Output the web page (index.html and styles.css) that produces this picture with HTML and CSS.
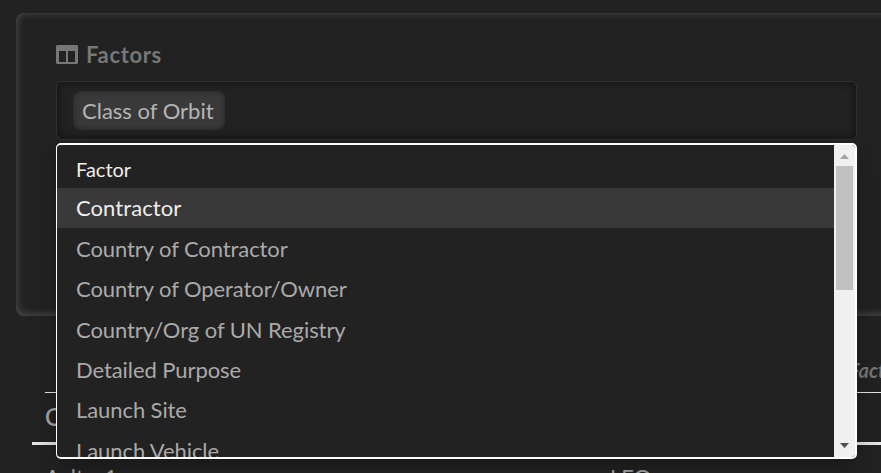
FILE: index.html
```html
<!DOCTYPE html>
<html lang="en">
<head>
<meta charset="utf-8">
<title>Factors</title>
<link rel="stylesheet" href="styles.css">
</head>
<body>
<section class="panel">
  <h2 class="panel-title">
    <svg class="icon" viewBox="0 0 22 19" aria-hidden="true"><path fill="currentColor" fill-rule="evenodd" d="M1 0H21L22 1V18L21 19H1L0 18V1ZM3 6V17H10V6ZM12 6V17H19V6Z"/></svg>
    <span>Factors</span>
  </h2>
  <div class="select">
    <span class="tag">Class of Orbit</span>
    <div class="dropdown">
      <div class="options">
        <div class="group">Factor</div>
        <div class="option active">Contractor</div>
        <div class="option">Country of Contractor</div>
        <div class="option">Country of Operator/Owner</div>
        <div class="option">Country/Org of UN Registry</div>
        <div class="option">Detailed Purpose</div>
        <div class="option">Launch Site</div>
        <div class="option">Launch Vehicle</div>
      </div>
      <div class="scrollbar">
        <svg class="arrow" viewBox="0 0 9 5"><path fill="#a3a3a3" d="M0 5L4.5 0L9 5Z"/></svg>
        <div class="thumb"></div>
        <svg class="arrow down" viewBox="0 0 9 5"><path fill="#505050" d="M0 0H9L4.5 5Z"/></svg>
      </div>
    </div>
  </div>
</section>
<section class="table">
  <div class="span-head">Factor</div>
  <div class="head">C</div>
  <div class="row"><span>Aalto-1</span><span>LEO</span></div>
</section>
</body>
</html>
```
FILE: styles.css
```css
* { box-sizing: border-box; }
html { overflow: hidden; }
body {
  margin: 0;
  height: 473px;
  padding: 13px 0 0 16px;
  overflow: hidden;
  background: #222;
  color: #aaa;
  font: 22px/30px Lato, sans-serif;
}
.panel {
  width: 900px;
  height: 303px;
  padding: 27px 0 0 40px;
  border-radius: 8px;
  box-shadow: inset 0 -1px 9px #555;
}
.panel-title {
  display: flex;
  align-items: center;
  gap: 8px;
  height: 30px;
  margin: 0 0 11px;
  color: #777;
  font-size: 22px;
  font-weight: 700;
  letter-spacing: .65px;
}
.icon { width: 22px; height: 19px; margin-top: -1px; }
.select {
  position: relative;
  width: 801px;
  height: 59px;
  padding: 9px 16px;
  border: 1px solid #303030;
  border-radius: 6px;
  box-shadow: inset 0 0 9px #111;
}
.tag {
  display: block;
  width: 152px;
  height: 39px;
  padding-left: 9px;
  border-radius: 8px;
  background: #393939;
  box-shadow: inset 0 0 5px #222;
  color: #b5b5b5;
  line-height: 40px;
  white-space: nowrap;
}
.dropdown {
  position: absolute;
  z-index: 2;
  top: 61px;
  left: -1px;
  display: flex;
  width: 801px;
  height: 316px;
  overflow: hidden;
  border: solid #fff;
  border-width: 2px 2px 2px 1px;
  border-radius: 5px;
  background: #222;
  box-shadow: 0 9px 26px rgba(0, 0, 0, .3);
}
.options { flex: 1; overflow: hidden; }
.group {
  height: 43px;
  padding: 9px 0 0 19px;
  color: #eee;
  font-size: 20px;
}
.option {
  height: 40.35px;
  padding-left: 19px;
  line-height: 40px;
  letter-spacing: -.08px;
}
.active {
  height: 40px;
  margin-bottom: .85px;
  background: #393939;
  color: #eee;
  letter-spacing: .08px;
}
.scrollbar {
  display: flex;
  flex-direction: column;
  width: 21px;
  padding: 9px 2px 9px;
  background: #f0f0f0;
}
.arrow { width: 9px; height: 5px; margin-left: 4px; }
.thumb { height: 124px; margin: 7px 0 auto; background: #c1c1c1; }
.table { width: 869px; margin-left: 16px; }
.span-head {
  height: 77px;
  margin-left: 13px;
  padding: 39px 0 0 804px;
  border-bottom: 1px solid #e6e8e8;
  color: #777;
  font-size: 20px;
  font-style: italic;
  font-weight: 700;
}
.head {
  height: 52px;
  padding: 9px 0 0 13px;
  border-bottom: 3px solid #e6e8e8;
  font-size: 24px;
  font-weight: 500;
}
.row {
  display: grid;
  grid-template-columns: 565px 1fr;
  padding: 17px 0 0 13px;
}
```
